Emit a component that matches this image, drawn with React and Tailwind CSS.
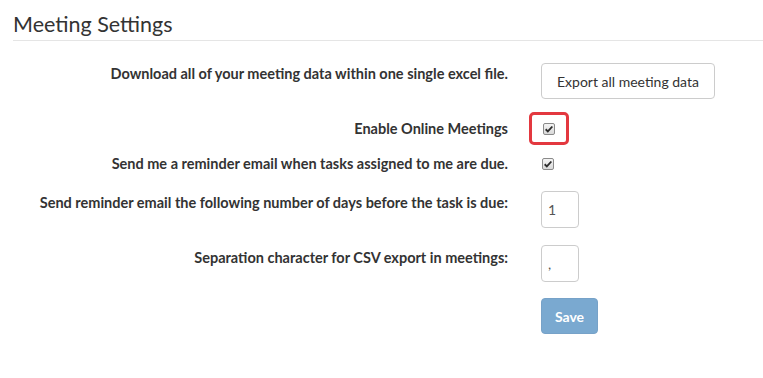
import React, { useState } from "react";

function CheckMark({ checked, onClick }) {
  return (
    <button
      type="button"
      onClick={onClick}
      className="w-[12px] h-[12px] rounded-[2px] border border-[#8a8a8a] bg-gradient-to-b from-[#f4f4f4] to-[#d9d9d9] flex items-center justify-center p-0"
    >
      {checked && (
        <svg viewBox="0 0 12 12" className="w-[10px] h-[10px]">
          <path d="M2 6.3 L4.6 8.8 L10 3" fill="none" stroke="#2b2b2b" strokeWidth="2.2" />
        </svg>
      )}
    </button>
  );
}

export default function App() {
  const [online, setOnline] = useState(true);
  const [reminder, setReminder] = useState(true);
  const [days, setDays] = useState("1");
  const [sep, setSep] = useState(",");

  const labelCls = "w-[495px] shrink-0 text-right text-[14.5px] leading-5 font-bold text-[#333]";

  return (
    <div className="min-h-screen bg-white pl-[13px] text-[#333] font-['Lato','Liberation_Sans',sans-serif]">
      <h1 className="pt-[9px] text-[21.5px] leading-[30px] font-normal text-[#333]">Meeting Settings</h1>
      <hr className="mt-[1px] border-t border-[#e5e5e5]" />

      <form onSubmit={(e) => e.preventDefault()}>
        {/* export */}
        <div className="mt-[22px] flex items-start gap-[33px]">
          <div className={labelCls + " pt-[1px]"}>Download all of your meeting data within one single excel file.</div>
          <button
            type="button"
            className="h-[36px] px-[15px] rounded-[4px] border border-[#ccc] bg-white text-[14px] text-[#333]"
          >
            Export all meeting data
          </button>
        </div>

        {/* online meetings */}
        <div className="mt-[13px] flex items-center gap-[33px] h-[33px]">
          <div className={labelCls}>Enable Online Meetings</div>
          <div className="-ml-[12px] w-[40px] h-[33px] rounded-[5px] border-[3px] border-[#e3383f] flex items-center justify-center">
            <CheckMark checked={online} onClick={() => setOnline(!online)} />
          </div>
        </div>

        {/* reminder */}
        <div className="mt-[9px] flex items-center gap-[33px] h-[20px]">
          <div className={labelCls}>Send me a reminder email when tasks assigned to me are due.</div>
          <div className="pl-[1px]">
            <CheckMark checked={reminder} onClick={() => setReminder(!reminder)} />
          </div>
        </div>

        {/* days */}
        <div className="mt-[17px] flex items-start gap-[33px]">
          <div className={labelCls + " pt-[2px]"}>Send reminder email the following number of days before the task is due:</div>
          <input
            value={days}
            onChange={(e) => setDays(e.target.value)}
            className="w-[38px] h-[37px] px-[6px] rounded-[4px] border border-[#ccc] text-[14px] text-[#555] outline-none"
          />
        </div>

        {/* separator */}
        <div className="mt-[17px] flex items-start gap-[33px]">
          <div className={labelCls + " pt-[3px]"}>Separation character for CSV export in meetings:</div>
          <input
            value={sep}
            onChange={(e) => setSep(e.target.value)}
            className="w-[38px] h-[37px] px-[6px] rounded-[4px] border border-[#ccc] text-[14px] text-[#555] outline-none"
          />
        </div>

        <div className="mt-[16px] flex gap-[33px]">
          <div className="w-[495px] shrink-0" />
          <button
            type="submit"
            disabled
            className="w-[57px] h-[36px] rounded-[4px] border border-[#77a2c8] bg-[#7aa9d0] text-white text-[14px] font-bold"
          >
            Save
          </button>
        </div>
      </form>
    </div>
  );
}
